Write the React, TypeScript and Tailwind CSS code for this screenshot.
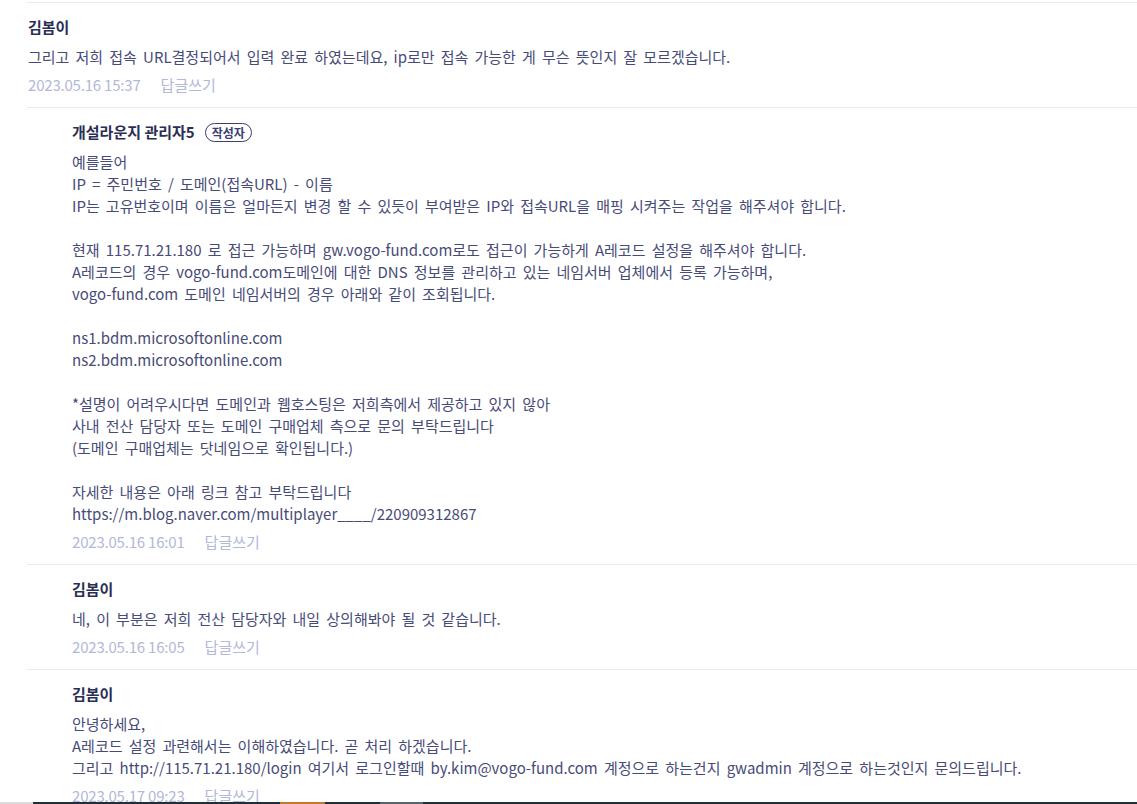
import React from 'react';

type Comment = {
  id: number;
  name: string;
  author?: boolean;
  reply?: boolean;
  lines: string[];
  date: string;
};

const COMMENTS: Comment[] = [
  {
    id: 1,
    name: '김봄이',
    lines: ['그리고 저희 접속 URL결정되어서 입력 완료 하였는데요, ip로만 접속 가능한 게 무슨 뜻인지 잘 모르겠습니다.'],
    date: '2023.05.16 15:37',
  },
  {
    id: 2,
    name: '개설라운지 관리자5',
    author: true,
    reply: true,
    lines: [
      '예를들어',
      'IP = 주민번호 / 도메인(접속URL) - 이름',
      'IP는 고유번호이며 이름은 얼마든지 변경 할 수 있듯이 부여받은 IP와 접속URL을 매핑 시켜주는 작업을 해주셔야 합니다.',
      '',
      '현재 115.71.21.180 로 접근 가능하며 gw.vogo-fund.com로도 접근이 가능하게 A레코드 설정을 해주셔야 합니다.',
      'A레코드의 경우 vogo-fund.com도메인에 대한 DNS 정보를 관리하고 있는 네임서버 업체에서 등록 가능하며,',
      'vogo-fund.com 도메인 네임서버의 경우 아래와 같이 조회됩니다.',
      '',
      'ns1.bdm.microsoftonline.com',
      'ns2.bdm.microsoftonline.com',
      '',
      '*설명이 어려우시다면 도메인과 웹호스팅은 저희측에서 제공하고 있지 않아',
      '사내 전산 담당자 또는 도메인 구매업체 측으로 문의 부탁드립니다',
      '(도메인 구매업체는 닷네임으로 확인됩니다.)',
      '',
      '자세한 내용은 아래 링크 참고 부탁드립니다',
      'https://m.blog.naver.com/multiplayer____/220909312867',
    ],
    date: '2023.05.16 16:01',
  },
  {
    id: 3,
    name: '김봄이',
    reply: true,
    lines: ['네, 이 부분은 저희 전산 담당자와 내일 상의해봐야 될 것 같습니다.'],
    date: '2023.05.16 16:05',
  },
  {
    id: 4,
    name: '김봄이',
    reply: true,
    lines: [
      '안녕하세요,',
      'A레코드 설정 과련해서는 이해하였습니다. 곧 처리 하겠습니다.',
      '그리고 http://115.71.21.180/login 여기서 로그인할때 by.kim@vogo-fund.com 계정으로 하는건지 gwadmin 계정으로 하는것인지 문의드립니다.',
    ],
    date: '2023.05.17 09:23',
  },
];

const CommentItem: React.FC<{ c: Comment }> = ({ c }) => (
  <li className="border-t border-[#e9e9f1] pt-[13px] pb-[11px]">
    <div className={c.reply ? 'pl-[45px]' : 'pl-px'}>
      <div className="flex items-center gap-[10px]">
        <span className="text-[15px] leading-[22px] font-bold text-[#2a2e55]">{c.name}</span>
        {c.author && (
          <span className="rounded-full border border-[#3a3f73] px-[6px] text-[12px] leading-[17px] font-bold text-[#3a3f73]">
            작성자
          </span>
        )}
      </div>
      <div className="mt-[8px] text-[15px] leading-[22px] text-[#474b78] [word-spacing:2.8px]">
        {c.lines.map((l, i) => (
          <p key={i} className="h-[22px] whitespace-pre">{l}</p>
        ))}
      </div>
      <div className="mt-[6px] flex gap-[20px] text-[15px] leading-[22px] text-[#b2b8d8]">
        <span className="tracking-[-0.2px]">{c.date}</span>
        <span>답글쓰기</span>
      </div>
    </div>
  </li>
);

const App: React.FC = () => {
  return (
    <div
      className="flex h-[804px] flex-col overflow-hidden bg-white"
      style={{ fontFamily: '"Noto Sans CJK KR", "Noto Sans", sans-serif' }}
    >
      {/* Comment list */}
      <div className="flex-1 overflow-hidden pt-[2px] pl-[27px]">
        <ul>
          {COMMENTS.map((c) => (
            <CommentItem key={c.id} c={c} />
          ))}
        </ul>
      </div>

      {/* Taskbar edge peeking in at the bottom */}
      <div className="flex h-[2px] shrink-0">
        <div className="w-[33px] bg-[#dcdcdc]" />
        <div className="w-[247px] bg-[#1f2f37]" />
        <div className="w-[45px] bg-[#c8782e]" />
        <div className="w-[55px] bg-[#1f2f37]" />
        <div className="w-[43px] bg-[#56656b]" />
        <div className="flex-1 bg-[#1f2f37]" />
      </div>
    </div>
  );
};

export default App;
